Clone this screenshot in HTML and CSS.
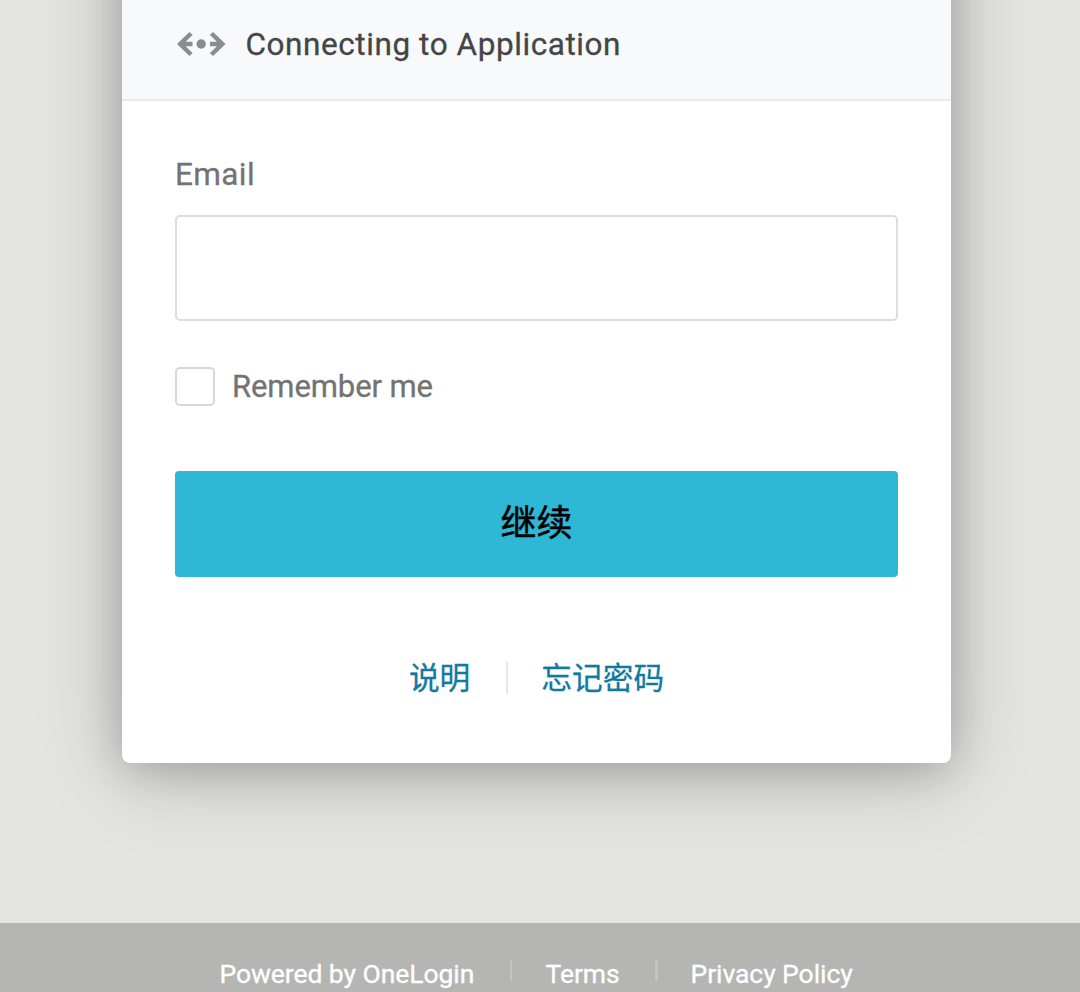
FILE: index.html
```html
<!DOCTYPE html>
<html lang="zh-CN">
<head>
<meta charset="utf-8">
<title>Connecting to Application</title>
<link rel="stylesheet" href="styles.css">
</head>
<body>
<main class="stage">
  <section class="card">
    <header class="card-header">
      <svg class="connect-icon" width="50" height="26" viewBox="0 0 50 26" fill="none" stroke="#8c8c8c" stroke-width="4.500">
        <path d="M15 2.500 4.200 13 15 23.500M4.200 13H16.500M35.500 2.500 46.300 13 35.500 23.500M46.300 13H34"/>
        <circle cx="25.200" cy="13" r="4.700" fill="#8c8c8c" stroke="none"/>
      </svg>
      <h1 class="title">Connecting to Application</h1>
    </header>
    <form class="login-form">
      <label class="field-label" for="email">Email</label>
      <input class="field-input" id="email" type="text">
      <label class="remember"><input class="checkbox" type="checkbox"><span class="remember-text">Remember me</span></label>
      <button class="submit" type="button">继续</button>
      <nav class="help-links">
        <a class="help-link" href="#">说明</a>
        <span class="help-divider"></span>
        <a class="help-link" href="#">忘记密码</a>
      </nav>
    </form>
  </section>
</main>
<footer class="footer">
  <a class="footer-link powered" href="#">Powered by OneLogin</a>
  <span class="footer-divider"></span>
  <a class="footer-link terms" href="#">Terms</a>
  <span class="footer-divider wide"></span>
  <a class="footer-link privacy" href="#">Privacy Policy</a>
</footer>
</body>
</html>
```
FILE: styles.css
```css
* { box-sizing: border-box; }
body {
  margin: 0;
  height: 992px;
  overflow: hidden;
  display: flex;
  flex-direction: column;
  background: #e4e4e2;
  font-family: Roboto, "Noto Sans CJK SC", sans-serif;
  -webkit-text-stroke: .3px currentColor;
}
.stage { height: 923px; flex: none; display: flex; align-items: flex-start; padding-left: 122px; }
.card {
  width: 829px;
  height: 882.5px;
  margin-top: -120px;
  background: #fff;
  border-radius: 0 0 8px 8px;
  box-shadow: 0 9px 88px rgba(0,0,0,.2), 0 5px 44px rgba(0,0,0,.2);
}
.card-header {
  height: 221px;
  padding: 120px 0 11px 54px;
  display: flex;
  align-items: center;
  background: #f8f9fb;
  border-bottom: 2px solid #e9eaec;
}
.connect-icon { flex: none; margin-right: 19.500px; }
.title {
  margin: 1px 0 0;
  font-size: 31.500px;
  font-weight: 400;
  line-height: 40px;
  letter-spacing: .57px;
  color: #444545;
  white-space: nowrap;
}
.login-form { padding: 54px 53px 0; display: flex; flex-direction: column; }
.field-label { font-size: 31.500px; line-height: 40px; letter-spacing: .4px; color: #737373; }
.field-input {
  width: 723px;
  height: 106px;
  margin: 20px 0 46px;
  border: 2px solid #dedede;
  border-radius: 5px;
  background: #fff;
}
.remember { display: flex; align-items: center; height: 39px; }
.checkbox {
  appearance: none;
  width: 40px;
  height: 39px;
  margin: 0 17px 0 0;
  border: 2px solid #d8d8d8;
  border-radius: 5px;
  background: #fff;
}
.remember-text { font-size: 31px; line-height: 39px; letter-spacing: -.1px; color: #737373; white-space: nowrap; }
.submit {
  height: 106px;
  margin-top: 65px;
  padding: 0 0 9px;
  border: 0;
  border-radius: 4px;
  background: #2eb8d6;
  color: #000;
  font: 400 36px Roboto, "Noto Sans CJK SC", sans-serif;
  -webkit-text-stroke: .5px currentColor;
}
.help-links { display: flex; justify-content: center; align-items: center; height: 44px; margin-top: 79px; }
.help-link { padding-top: 1px; font-size: 30.700px; line-height: 44px; color: #107a9f; text-decoration: none; white-space: nowrap; -webkit-text-stroke: .3px currentColor; }
.help-divider { width: 2px; height: 32px; margin: 0 33px 0 36px; background: #e8e8e8; }
.footer { flex: none; height: 69px; display: flex; padding: 31px 0 0 219.500px; background: #b5b5b3; }
.footer-link { font-size: 26.500px; line-height: 40px; letter-spacing: -.07px; color: #fff; text-decoration: none; white-space: nowrap; }
.powered { width: 290px; }
.terms { width: 107px; margin-left: 34px; }
.privacy { margin-left: 33px; }
.footer-divider { width: 2px; height: 21px; margin-top: 6px; background: #c3c3c1; }
.footer-divider.wide { width: 3px; margin-left: 2px; }
```
